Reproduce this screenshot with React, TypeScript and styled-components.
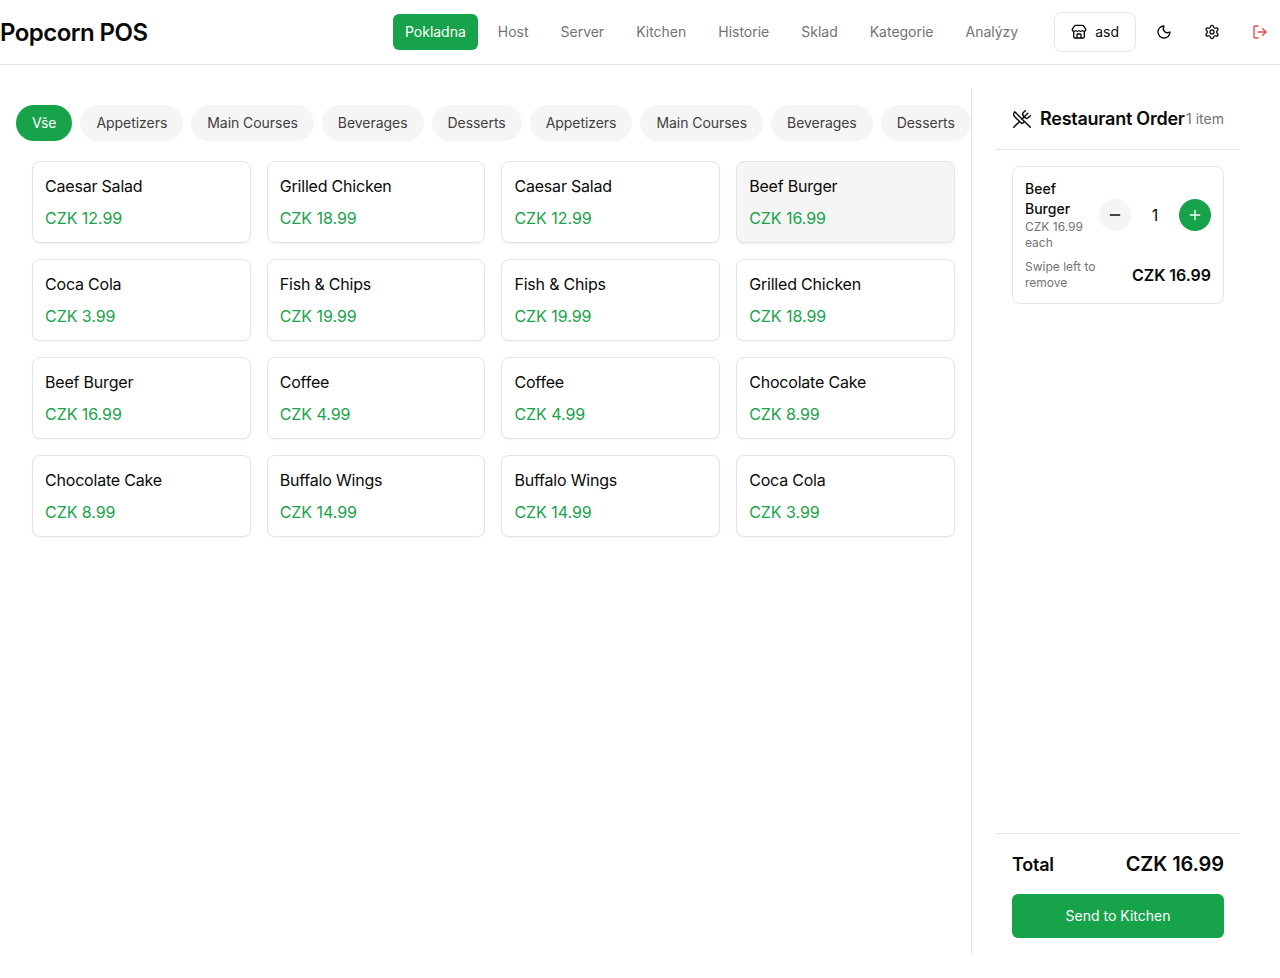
import React, { FC } from 'react';
import styled, { createGlobalStyle } from 'styled-components';
import { LogOut, Minus, Moon, Plus, Settings, Store, UtensilsCrossed } from 'lucide-react';

const GREEN = '#16a34a';
const BORDER = '#e5e5e5';

const GlobalStyle = createGlobalStyle`
  html, body {
    margin: 0;
    padding: 0;
    background: white;
    color: #0a0a0a;
    font-family: Inter, "Noto Sans", sans-serif;
  }
  * {
    box-sizing: border-box;
  }
  button {
    font-family: inherit;
  }
`;

const Page = styled.div`
  display: flex;
  flex-direction: column;
  height: 978px;
  overflow: hidden;
`;

const Header = styled.header`
  display: flex;
  align-items: center;
  justify-content: space-between;
  height: 65px;
  flex: none;
  border-bottom: 1px solid ${BORDER};
`;

const Logo = styled.h1`
  margin: 2px 0 0;
  font-size: 24px;
  line-height: 32px;
  font-weight: 600;
  letter-spacing: -0.55px;
`;

const HeaderRight = styled.div`
  display: flex;
  align-items: center;
  gap: 8px;
`;

const Nav = styled.nav`
  display: flex;
  align-items: center;
  gap: 8px;
  margin-right: 16px;
`;

const NavItem = styled.button<{ $active?: boolean }>`
  height: 36px;
  padding: 0 12px 2px;
  border: 0;
  border-radius: 6px;
  background: ${(p) => (p.$active ? GREEN : 'transparent')};
  color: ${(p) => (p.$active ? 'white' : '#737373')};
  font-size: 14px;
  font-weight: 400;
  letter-spacing: -0.01px;
`;

const StoreButton = styled.button`
  display: flex;
  align-items: center;
  gap: 8px;
  height: 40px;
  padding: 0 16px;
  border: 1px solid ${BORDER};
  border-radius: 8px;
  background: white;
  color: #0a0a0a;
  font-size: 14px;
  font-weight: 400;
`;

const StoreLabel = styled.span`
  margin-top: -2px;
`;

const IconButton = styled.button<{ $danger?: boolean }>`
  display: flex;
  align-items: center;
  justify-content: center;
  width: 40px;
  height: 40px;
  padding: 0;
  border: 0;
  background: transparent;
  color: ${(p) => (p.$danger ? '#ef4444' : '#0a0a0a')};
`;

const Main = styled.main`
  display: flex;
  flex: 1;
  min-height: 0;
  padding: 24px 16px 24px 0;
`;

const MenuColumn = styled.section`
  flex: 1;
  min-width: 0;
`;

const Filters = styled.div`
  display: flex;
  gap: 8px;
  padding: 16px 0 20px 16px;
`;

const Pill = styled.button<{ $active?: boolean }>`
  flex: none;
  height: 36px;
  padding: 0 16px 2px;
  border: 0;
  border-radius: 18px;
  background: ${(p) => (p.$active ? GREEN : '#f5f5f5')};
  color: ${(p) => (p.$active ? 'white' : '#404040')};
  font-size: 14px;
  font-weight: 400;
  letter-spacing: -0.05px;
`;

const ProductGrid = styled.div`
  display: grid;
  grid-template-columns: repeat(4, 1fr);
  gap: 16px;
  padding: 0 16.1px 0 32px;
`;

const ProductCard = styled.div<{ $selected?: boolean }>`
  display: flex;
  flex-direction: column;
  gap: 8px;
  padding: 12px;
  border: 1px solid ${BORDER};
  border-radius: 8px;
  background: ${(p) => (p.$selected ? '#f5f5f5' : 'white')};
  box-shadow: 0 1px 2px rgba(0, 0, 0, 0.05);
`;

const ProductName = styled.span`
  font-size: 16px;
  line-height: 24px;
  font-weight: 400;
  letter-spacing: -0.2px;
`;

const ProductPrice = styled.span`
  font-size: 16px;
  line-height: 24px;
  font-weight: 400;
  letter-spacing: -0.05px;
  color: ${GREEN};
`;

const OrderPanel = styled.aside`
  display: flex;
  flex-direction: column;
  flex: none;
  width: 293px;
  padding: 0 24px;
  border-left: 1px solid ${BORDER};
`;

const OrderHeader = styled.div`
  display: flex;
  align-items: center;
  justify-content: space-between;
  height: 61px;
  padding: 0 16px;
  border-bottom: 1px solid ${BORDER};
`;

const OrderTitle = styled.div`
  display: flex;
  align-items: center;
  gap: 8px;
  font-size: 18px;
  line-height: 28px;
  font-weight: 600;
  letter-spacing: -0.25px;
  white-space: nowrap;
`;

const ItemCount = styled.span`
  margin-bottom: 2px;
  font-size: 14px;
  color: #737373;
  white-space: nowrap;
`;

const OrderList = styled.div`
  flex: 1;
  padding: 16px;
`;

const OrderCard = styled.div`
  display: flex;
  flex-direction: column;
  gap: 8px;
  padding: 12px;
  border: 1px solid ${BORDER};
  border-radius: 8px;
  background: white;
`;

const OrderRow = styled.div`
  display: flex;
  align-items: center;
  justify-content: space-between;
  gap: 12px;
`;

const OrderInfo = styled.div`
  min-width: 0;
`;

const OrderName = styled.div`
  font-size: 14px;
  line-height: 20px;
  font-weight: 500;
`;

const SmallNote = styled.div`
  font-size: 12px;
  line-height: 16px;
  color: #737373;
`;

const Stepper = styled.div`
  display: flex;
  flex: none;
  align-items: center;
  width: 112px;
`;

const RoundButton = styled.button<{ $primary?: boolean }>`
  display: flex;
  align-items: center;
  justify-content: center;
  flex: none;
  width: 32px;
  height: 32px;
  padding: 0;
  border: 0;
  border-radius: 50%;
  background: ${(p) => (p.$primary ? GREEN : '#f5f5f5')};
  color: ${(p) => (p.$primary ? 'white' : '#0a0a0a')};
`;

const Quantity = styled.span`
  flex: 1;
  text-align: center;
  font-size: 16px;
  line-height: 24px;
  font-weight: 400;
`;

const LineTotal = styled.span`
  flex: none;
  font-size: 16px;
  line-height: 24px;
  font-weight: 600;
  letter-spacing: -0.05px;
`;

const Summary = styled.div`
  display: flex;
  flex-direction: column;
  gap: 16px;
  padding: 16px;
  border-top: 1px solid ${BORDER};
`;

const TotalRow = styled.div`
  display: flex;
  align-items: center;
  justify-content: space-between;
  height: 28px;
`;

const TotalLabel = styled.span`
  font-size: 18px;
  font-weight: 600;
  letter-spacing: -0.25px;
`;

const TotalValue = styled.span`
  font-size: 20px;
  font-weight: 600;
  letter-spacing: -0.1px;
`;

const SendButton = styled.button`
  height: 44px;
  padding: 0 0 2px;
  border: 0;
  border-radius: 6px;
  background: ${GREEN};
  color: white;
  font-size: 14px;
  font-weight: 400;
`;

const NAV_ITEMS = ['Pokladna', 'Host', 'Server', 'Kitchen', 'Historie', 'Sklad', 'Kategorie', 'Analýzy'];

const CATEGORIES = [
  'Appetizers',
  'Main Courses',
  'Beverages',
  'Desserts',
  'Appetizers',
  'Main Courses',
  'Beverages',
  'Desserts',
];

const PRODUCTS = [
  ['Caesar Salad', '12.99'],
  ['Grilled Chicken', '18.99'],
  ['Caesar Salad', '12.99'],
  ['Beef Burger', '16.99'],
  ['Coca Cola', '3.99'],
  ['Fish & Chips', '19.99'],
  ['Fish & Chips', '19.99'],
  ['Grilled Chicken', '18.99'],
  ['Beef Burger', '16.99'],
  ['Coffee', '4.99'],
  ['Coffee', '4.99'],
  ['Chocolate Cake', '8.99'],
  ['Chocolate Cake', '8.99'],
  ['Buffalo Wings', '14.99'],
  ['Buffalo Wings', '14.99'],
  ['Coca Cola', '3.99'],
];

const App: FC = () => (
  <Page>
    <GlobalStyle />
    <Header>
      <Logo>Popcorn POS</Logo>
      <HeaderRight>
        <Nav>
          {NAV_ITEMS.map((item, i) => (
            <NavItem key={item} $active={i === 0}>
              {item}
            </NavItem>
          ))}
        </Nav>
        <StoreButton>
          <Store size={16} />
          <StoreLabel>asd</StoreLabel>
        </StoreButton>
        <IconButton>
          <Moon size={16} />
        </IconButton>
        <IconButton>
          <Settings size={16} />
        </IconButton>
        <IconButton $danger>
          <LogOut size={16} />
        </IconButton>
      </HeaderRight>
    </Header>
    <Main>
      <MenuColumn>
        <Filters>
          <Pill $active>Vše</Pill>
          {CATEGORIES.map((category, i) => (
            <Pill key={i}>{category}</Pill>
          ))}
        </Filters>
        <ProductGrid>
          {PRODUCTS.map(([name, price], i) => (
            <ProductCard key={i} $selected={i === 3}>
              <ProductName>{name}</ProductName>
              <ProductPrice>CZK {price}</ProductPrice>
            </ProductCard>
          ))}
        </ProductGrid>
      </MenuColumn>
      <OrderPanel>
        <OrderHeader>
          <OrderTitle>
            <UtensilsCrossed size={20} strokeWidth={1.75} />
            Restaurant Order
          </OrderTitle>
          <ItemCount>1 item</ItemCount>
        </OrderHeader>
        <OrderList>
          <OrderCard>
            <OrderRow>
              <OrderInfo>
                <OrderName>Beef Burger</OrderName>
                <SmallNote>CZK 16.99 each</SmallNote>
              </OrderInfo>
              <Stepper>
                <RoundButton>
                  <Minus size={16} />
                </RoundButton>
                <Quantity>1</Quantity>
                <RoundButton $primary>
                  <Plus size={16} />
                </RoundButton>
              </Stepper>
            </OrderRow>
            <OrderRow>
              <SmallNote>Swipe left to remove</SmallNote>
              <LineTotal>CZK 16.99</LineTotal>
            </OrderRow>
          </OrderCard>
        </OrderList>
        <Summary>
          <TotalRow>
            <TotalLabel>Total</TotalLabel>
            <TotalValue>CZK 16.99</TotalValue>
          </TotalRow>
          <SendButton>Send to Kitchen</SendButton>
        </Summary>
      </OrderPanel>
    </Main>
  </Page>
);

export default App;
